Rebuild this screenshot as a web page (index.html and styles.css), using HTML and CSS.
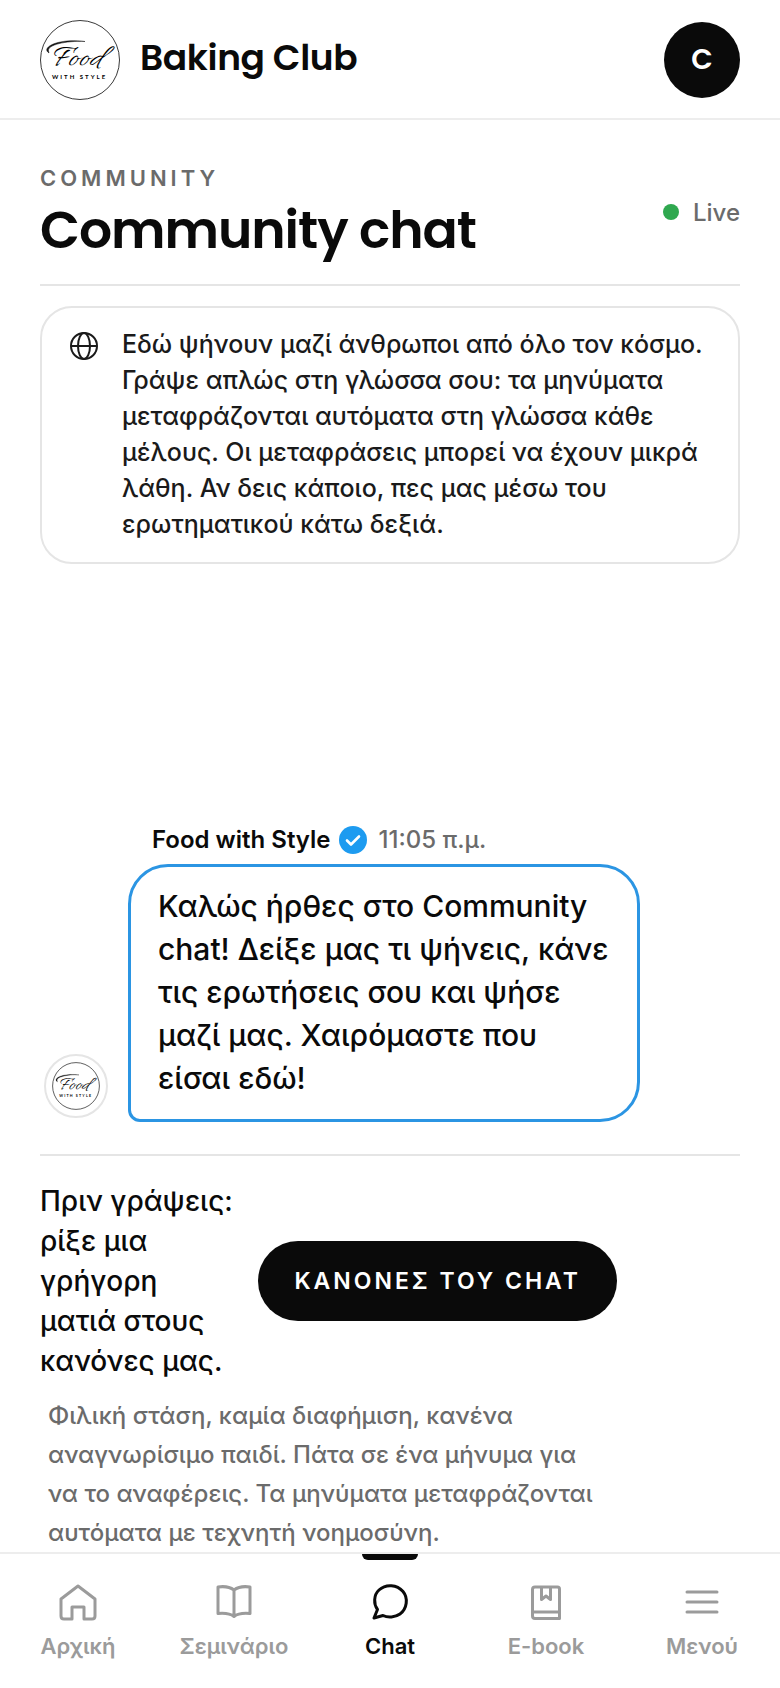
FILE: index.html
```html
<!DOCTYPE html>
<html lang="el">

<head>
  <meta charset="UTF-8">
  <meta name="viewport" content="width=device-width, initial-scale=1.0">
  <title>Baking Club</title>
  <link rel="stylesheet" href="styles.css">
</head>

<body>
  <header class="topbar">
    <a href="#" class="brand">
      <svg class="brand-logo" viewBox="0 0 80 80">
        <circle cx="40" cy="40" r="39.500" fill="#fff" stroke="#222" stroke-width="0.900" />
        <path d="M9 33C0 27 20 18 45 21.500C26 20.500 7 25 8.500 31Z" fill="#111" stroke="#111" stroke-width="0.500" />
        <text x="11" y="45" class="logo-script">Food</text>
        <text x="12" y="59" class="logo-caps">WITH STYLE</text>
      </svg>
      <span>Baking Club</span>
    </a>
    <button class="profile">C</button>
  </header>

  <main class="content">
    <div class="page-head">
      <div>
        <p class="eyebrow">COMMUNITY</p>
        <h1>Community chat</h1>
      </div>
      <span class="live"><i class="dot"></i>Live</span>
    </div>

    <div class="notice">
      <svg class="globe" viewBox="0 0 28 28" fill="none" stroke="currentColor" stroke-width="2" aria-hidden="true">
        <circle cx="14" cy="14" r="13" />
        <path d="M1 14H27" />
        <ellipse cx="14" cy="14" rx="6" ry="13" />
      </svg>
      <p>Εδώ ψήνουν μαζί άνθρωποι από όλο τον κόσμο. Γράψε απλώς στη γλώσσα σου: τα μηνύματα μεταφράζονται αυτόματα στη γλώσσα κάθε μέλους. Οι μεταφράσεις μπορεί να έχουν μικρά λάθη. Αν δεις κάποιο, πες μας μέσω του ερωτηματικού κάτω δεξιά.</p>
    </div>

    <div class="messages">
      <div class="message">
        <div class="avatar">
          <svg viewBox="0 0 80 80">
            <circle cx="40" cy="40" r="39" fill="#fff" stroke="#222" stroke-width="1.200" />
            <path d="M9 33C0 27 20 18 45 21.500C26 20.500 7 25 8.500 31Z" fill="#111" stroke="#111" stroke-width="0.500" />
            <text x="11" y="45" class="logo-script">Food</text>
            <text x="12" y="59" class="logo-caps">WITH STYLE</text>
          </svg>
        </div>
        <div class="message-body">
          <div class="meta">
            <strong>Food with Style</strong>
            <svg class="verified" viewBox="0 0 28 28" fill="none" aria-hidden="true">
              <circle cx="14" cy="14" r="14" fill="#1d9bf0" />
              <path d="M8 14.500L12 18.500L20 10.500" stroke="#fff" stroke-width="2.600" stroke-linecap="round" stroke-linejoin="round" />
            </svg>
            <time>11:05 π.μ.</time>
          </div>
          <p class="bubble">Καλώς ήρθες στο Community chat! Δείξε μας τι ψήνεις, κάνε τις ερωτήσεις σου και ψήσε μαζί μας. Χαιρόμαστε που είσαι εδώ!</p>
        </div>
      </div>
    </div>

    <div class="composer">
      <div class="rules">
        <p>Πριν γράψεις: ρίξε μια γρήγορη ματιά στους κανόνες μας.</p>
        <button class="rules-btn">ΚΑΝΟΝΕΣ ΤΟΥ CHAT</button>
      </div>
      <p class="hint">Φιλική στάση, καμία διαφήμιση, κανένα αναγνωρίσιμο παιδί. Πάτα σε ένα μήνυμα για να το αναφέρεις. Τα μηνύματα μεταφράζονται αυτόματα με τεχνητή νοημοσύνη.</p>
    </div>
  </main>

  <nav class="tabbar">
    <a href="#" class="tab">
      <svg viewBox="0 0 40 40" aria-hidden="true"><path d="M20 4L37 17V34Q37 37 34 37H26V25H14V37H6Q3 37 3 34V17Z" /></svg>
      <span>Αρχική</span>
    </a>
    <a href="#" class="tab">
      <svg viewBox="0 0 40 40" aria-hidden="true"><path d="M20 8Q14 3.500 4 5V31.500Q15 30.500 20 34.500Q25 30.500 36 31.500V5Q26 3.500 20 8ZM20 8V34" /></svg>
      <span>Σεμινάριο</span>
    </a>
    <a href="#" class="tab active">
      <svg viewBox="0 0 40 40" aria-hidden="true"><path d="M4 36L7.500 27.500C3.500 22 3.500 13 9 8C16 1.500 27 2.500 33 9.500C38.500 16 37 27 30 32C25 35.500 18 36 13 33.500Z" /></svg>
      <span>Chat</span>
    </a>
    <a href="#" class="tab">
      <svg viewBox="0 0 40 40" aria-hidden="true"><path d="M9 5H31.500Q33.500 5 33.500 7V36.500H9Q6.500 36.500 6.500 34V7.500Q6.500 5 9 5ZM7 30H33M15.500 5V17.500L20 14L24.500 17.500V5" /></svg>
      <span>E-book</span>
    </a>
    <a href="#" class="tab">
      <svg viewBox="0 0 40 40" aria-hidden="true"><path d="M5 10H35M5 20H35M5 30H35" /></svg>
      <span>Μενού</span>
    </a>
  </nav>
</body>

</html>
```
FILE: styles.css
```css
* {
  margin: 0;
  padding: 0;
  box-sizing: border-box;
}

body {
  height: 100vh;
  display: flex;
  flex-direction: column;
  overflow: hidden;
  font-family: Inter, "Noto Sans", sans-serif;
  font-weight: 500;
  color: #0a0a0a;
  background-color: #fff;
}

button {
  border: none;
  color: #fff;
  background-color: #0a0a0a;
  font-family: inherit;
  font-weight: 600;
  cursor: pointer;
}

a {
  color: inherit;
  text-decoration: none;
}

.logo-script {
  font-family: "Allura", "Great Vibes", "Alex Brush", "Dancing Script", "Liberation Serif", serif;
  font-size: 31px;
  font-style: italic;
  font-weight: 400;
}

.logo-caps {
  font-family: Lato, sans-serif;
  font-size: 6px;
  font-weight: 700;
  letter-spacing: 2px;
}

.topbar {
  flex: none;
  height: 120px;
  padding: 20px 40px 18px;
  display: flex;
  align-items: center;
  justify-content: space-between;
  border-bottom: 2px solid #ededed;
}

.brand {
  display: flex;
  align-items: center;
  gap: 20px;
  font-family: Poppins, Inter, sans-serif;
  font-size: 36px;
  font-weight: 600;
  letter-spacing: -0.01em;
}

.brand span {
  padding-bottom: 6px;
}

.brand-logo {
  width: 80px;
  height: 80px;
  letter-spacing: normal;
}

.profile {
  width: 76px;
  height: 76px;
  border-radius: 50%;
  font-family: Poppins, Inter, sans-serif;
  font-size: 28px;
}

.content {
  flex: 1;
  min-height: 0;
  padding: 44px 40px 0;
  display: flex;
  flex-direction: column;
}

.page-head {
  display: flex;
  align-items: center;
  justify-content: space-between;
  padding-bottom: 24px;
  border-bottom: 2px solid #e5e5e5;
}

.eyebrow {
  font-size: 22px;
  line-height: 28px;
  font-weight: 600;
  letter-spacing: 4px;
  color: #6b6b6b;
}

h1 {
  padding-top: 8px;
  font-family: Poppins, Inter, sans-serif;
  font-size: 52px;
  line-height: 60px;
  font-weight: 600;
  letter-spacing: -0.02em;
}

.live {
  display: flex;
  align-items: center;
  gap: 14px;
  font-size: 24px;
  color: #6b6b6b;
}

.dot {
  width: 16px;
  height: 16px;
  border-radius: 50%;
  background-color: #2fa84f;
}

.notice {
  display: flex;
  align-items: flex-start;
  gap: 24px;
  margin-top: 20px;
  padding: 18px 28px 20px;
  border: 2px solid #e5e5e5;
  border-radius: 32px;
  font-size: 25px;
  line-height: 36px;
  color: #1a1a1a;
}

.globe {
  flex: none;
  width: 28px;
  height: 28px;
  margin-top: 6px;
}

.messages {
  flex: 1;
  display: flex;
  flex-direction: column;
  justify-content: flex-end;
  padding: 0 4px 32px;
}

.message {
  display: flex;
  align-items: flex-end;
  gap: 20px;
}

.avatar {
  flex: none;
  width: 64px;
  height: 64px;
  margin-bottom: 4px;
  display: flex;
  align-items: center;
  justify-content: center;
  border: 2px solid #e5e5e5;
  border-radius: 50%;
}

.avatar svg {
  width: 48px;
  height: 48px;
}

.message-body {
  max-width: 512px;
}

.meta {
  display: flex;
  align-items: center;
  gap: 8px;
  margin-bottom: 10px;
  padding-left: 24px;
  font-size: 24px;
  line-height: 28px;
}

.meta strong {
  font-weight: 600;
}

.meta time {
  margin-left: 4px;
  color: #6b6b6b;
}

.verified {
  width: 28px;
  height: 28px;
}

.bubble {
  padding: 18px 27px 19px;
  border: 3px solid #2b95e3;
  border-radius: 40px 40px 40px 12px;
  font-size: 30px;
  line-height: 43px;
}

.composer {
  padding-top: 25px;
  border-top: 2px solid #e5e5e5;
}

.rules {
  display: flex;
  align-items: center;
  gap: 20px;
  padding-right: 123px;
  font-size: 28px;
  line-height: 40px;
}

.rules-btn {
  flex: none;
  height: 80px;
  padding: 0 36px;
  border-radius: 40px;
  font-size: 23px;
  letter-spacing: 3px;
}

.hint {
  padding: 15px 132px 0 8px;
  font-size: 24px;
  line-height: 39px;
  color: #6b6b6b;
}

.tabbar {
  flex: none;
  height: 136px;
  display: flex;
  border-top: 2px solid #ededed;
  background-color: #fff;
}

.tab {
  flex: 1;
  position: relative;
  padding-top: 28px;
  display: flex;
  flex-direction: column;
  align-items: center;
  gap: 10px;
  font-size: 22px;
  line-height: 28px;
  font-weight: 600;
  color: #9b9b9b;
}

.tab svg {
  width: 40px;
  height: 40px;
  fill: none;
  stroke: currentColor;
  stroke-width: 3;
  stroke-linecap: round;
  stroke-linejoin: round;
}

.tab.active {
  color: #0a0a0a;
}

.tab.active::before {
  content: "";
  position: absolute;
  top: 0;
  width: 56px;
  height: 6px;
  border-radius: 0 0 6px 6px;
  background-color: #0a0a0a;
}
```
